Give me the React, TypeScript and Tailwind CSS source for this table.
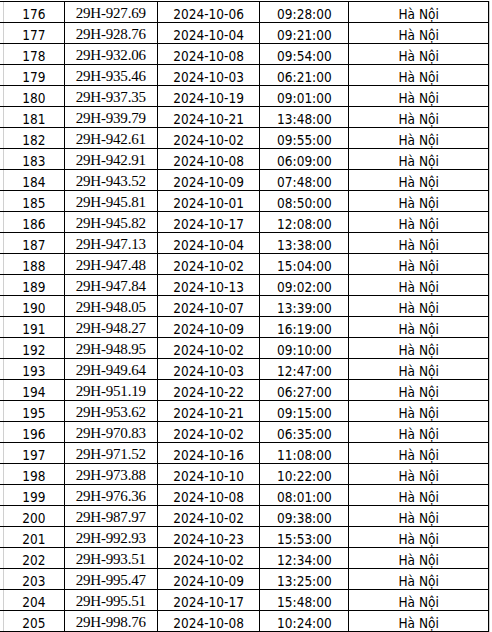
const rows: [number, string, string, string][] = [
  [176, '29H-927.69', '2024-10-06', '09:28:00'],
  [177, '29H-928.76', '2024-10-04', '09:21:00'],
  [178, '29H-932.06', '2024-10-08', '09:54:00'],
  [179, '29H-935.46', '2024-10-03', '06:21:00'],
  [180, '29H-937.35', '2024-10-19', '09:01:00'],
  [181, '29H-939.79', '2024-10-21', '13:48:00'],
  [182, '29H-942.61', '2024-10-02', '09:55:00'],
  [183, '29H-942.91', '2024-10-08', '06:09:00'],
  [184, '29H-943.52', '2024-10-09', '07:48:00'],
  [185, '29H-945.81', '2024-10-01', '08:50:00'],
  [186, '29H-945.82', '2024-10-17', '12:08:00'],
  [187, '29H-947.13', '2024-10-04', '13:38:00'],
  [188, '29H-947.48', '2024-10-02', '15:04:00'],
  [189, '29H-947.84', '2024-10-13', '09:02:00'],
  [190, '29H-948.05', '2024-10-07', '13:39:00'],
  [191, '29H-948.27', '2024-10-09', '16:19:00'],
  [192, '29H-948.95', '2024-10-02', '09:10:00'],
  [193, '29H-949.64', '2024-10-03', '12:47:00'],
  [194, '29H-951.19', '2024-10-22', '06:27:00'],
  [195, '29H-953.62', '2024-10-21', '09:15:00'],
  [196, '29H-970.83', '2024-10-02', '06:35:00'],
  [197, '29H-971.52', '2024-10-16', '11:08:00'],
  [198, '29H-973.88', '2024-10-10', '10:22:00'],
  [199, '29H-976.36', '2024-10-08', '08:01:00'],
  [200, '29H-987.97', '2024-10-02', '09:38:00'],
  [201, '29H-992.93', '2024-10-23', '15:53:00'],
  [202, '29H-993.51', '2024-10-02', '12:34:00'],
  [203, '29H-995.47', '2024-10-09', '13:25:00'],
  [204, '29H-995.51', '2024-10-17', '15:48:00'],
  [205, '29H-998.76', '2024-10-08', '10:24:00'],
];

const sans = "font-['DejaVu_Sans_Condensed','Liberation_Sans',sans-serif] text-[13.5px]";

export default function App() {
  return (
    <div className="flex h-[632px] w-[492px] bg-white pt-[1px] text-black">
      <div className="w-[490px] border-r border-[#d0d0d0]">
        <div className="w-[489px] border-t border-black">
          {rows.map(([stt, plate, date, time]) => (
            <div key={stt} className="flex h-[21px] border-b border-black leading-none">
              <div className="w-[3px]" />
              <div className={`flex w-[62px] items-end justify-center border-l border-r border-l-[#d0d0d0] border-r-black pb-[1px] ${sans}`}>
                {stt}
              </div>
              <div className="flex w-[93px] items-end justify-center border-r border-black pb-[1px] font-['Liberation_Serif',serif] text-[15px] tracking-[-0.2px]">
                {plate}
              </div>
              <div className={`flex w-[103px] items-end justify-center border-r border-black pb-[1px] ${sans}`}>
                {date}
              </div>
              <div className={`flex w-[89px] items-end justify-center border-r border-black pb-[1px] ${sans}`}>
                {time}
              </div>
              <div className={`flex w-[140px] items-end justify-center border-r border-black pb-[1px] ${sans}`}>
                Hà Nội
              </div>
            </div>
          ))}
        </div>
      </div>
    </div>
  );
}
